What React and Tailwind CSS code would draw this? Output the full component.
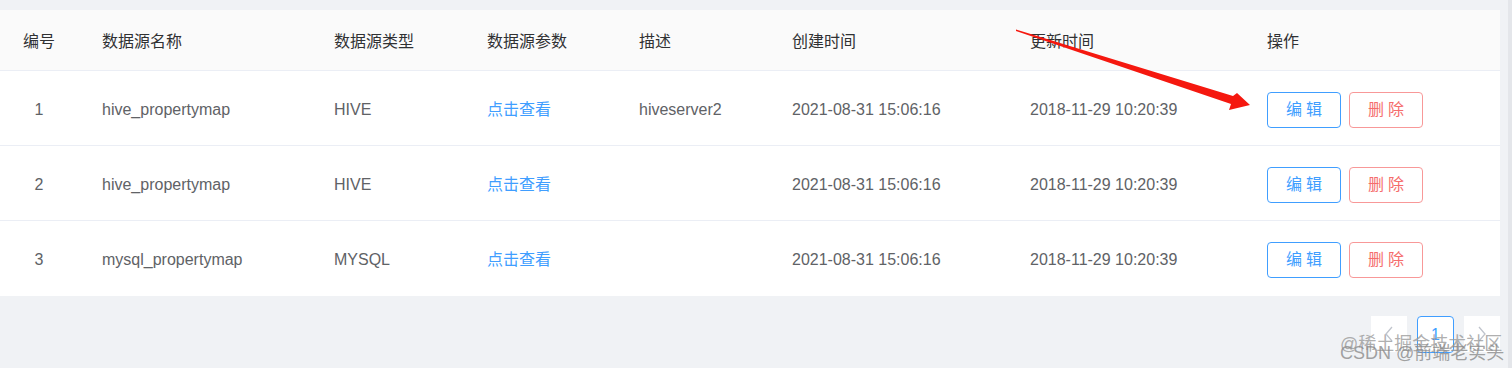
import React from 'react';

const columns = ['编号', '数据源名称', '数据源类型', '数据源参数', '描述', '创建时间', '更新时间', '操作'];

const rows = [
  { id: 1, name: 'hive_propertymap', type: 'HIVE', desc: 'hiveserver2' },
  { id: 2, name: 'hive_propertymap', type: 'HIVE', desc: '' },
  { id: 3, name: 'mysql_propertymap', type: 'MYSQL', desc: '' },
];

const grid = 'grid grid-cols-[78px_232px_153px_152px_153px_238px_237px_257px] items-center';

const Arrow = () => (
  <svg className="absolute left-0 top-0 pointer-events-none" width="1512" height="368">
    <polygon
      fill="#f5180f"
      points="1016,29.5 1233,96 1237,93 1250,105 1229,110 1231,104 1016,31"
    />
  </svg>
);

const App = () => {
  return (
    <div
      className="relative w-[1512px] h-[368px] bg-[#f0f2f5] overflow-hidden pt-[10px]"
      style={{ fontFamily: '"Liberation Sans", "Noto Sans CJK SC", sans-serif' }}
    >
      <div className="w-[1500px] bg-white">
        <div className={`${grid} h-[61px] pt-[3px] bg-[#fafafa] border-b border-[#ebeef5] text-[16px] text-[#303133]`}>
          {columns.map((c, i) => (
            <div key={c} className={i === 0 ? 'text-center' : 'pl-6'}>{c}</div>
          ))}
        </div>
        {rows.map((r, idx) => (
          <div
            key={r.id}
            className={`${grid} h-[75px] pt-[3px] text-[16px] text-[#606266] ${idx < rows.length - 1 ? 'border-b border-[#ebeef5]' : ''}`}
          >
            <div className="text-center">{r.id}</div>
            <div className="pl-6">{r.name}</div>
            <div className="pl-6">{r.type}</div>
            <div className="pl-6 text-[#409eff]">点击查看</div>
            <div className="pl-6">{r.desc}</div>
            <div className="pl-6">2021-08-31 15:06:16</div>
            <div className="pl-6">2018-11-29 10:20:39</div>
            <div className="pl-6 flex gap-2">
              <button className="w-[74px] h-[36px] rounded border border-[#409eff] bg-white text-[#409eff] tracking-[4px] pl-1">
                编辑
              </button>
              <button className="w-[74px] h-[36px] rounded border border-[#f89898] bg-white text-[#f56c6c] tracking-[4px] pl-1">
                删除
              </button>
            </div>
          </div>
        ))}
      </div>

      <div className="flex justify-end gap-[10px] w-[1500px] mt-5">
        <button className="w-[36px] h-[36px] bg-white text-[#c0c4cc] flex items-center justify-center">
          <svg width="10" height="16" viewBox="0 0 10 16" fill="none" stroke="currentColor" strokeWidth="1.3">
            <path d="M8 1 L2 8 L8 15" />
          </svg>
        </button>
        <button className="w-[37px] h-[37px] bg-white border border-[#409eff] rounded-sm text-[16px] text-[#409eff]">1</button>
        <button className="w-[36px] h-[36px] bg-white text-[#c0c4cc] flex items-center justify-center">
          <svg width="10" height="16" viewBox="0 0 10 16" fill="none" stroke="currentColor" strokeWidth="1.3">
            <path d="M2 1 L8 8 L2 15" />
          </svg>
        </button>
      </div>

      <div className="absolute right-0 top-0 w-[4px] h-full bg-[#e4e6ea]" />

      <div className="absolute left-[1340px] top-[335px] text-[18px] leading-none text-[#9a9a9a]/80 whitespace-nowrap">
        @稀土掘金技术社区
      </div>
      <div className="absolute left-[1340px] top-[344px] text-[18px] leading-none text-[#8a8a8a]/80 whitespace-nowrap">
        CSDN @前端老实头
      </div>

      <Arrow />
    </div>
  );
};

export default App;
